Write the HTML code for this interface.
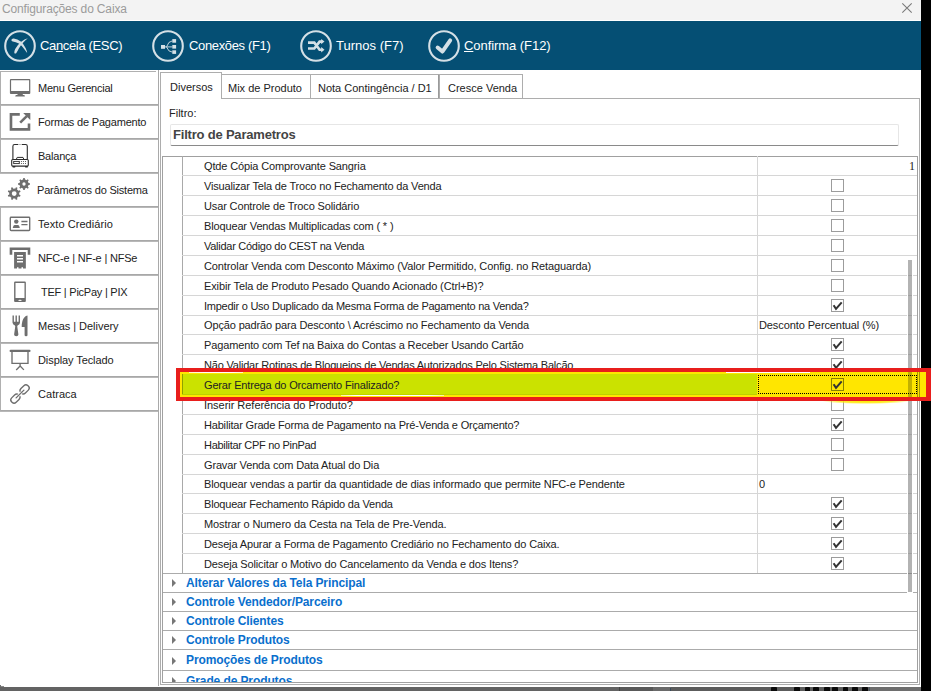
<!DOCTYPE html>
<html><head><meta charset="utf-8"><style>
*{margin:0;padding:0;box-sizing:border-box}
html,body{width:931px;height:691px;overflow:hidden;background:#fff;font-family:"Liberation Sans",sans-serif}
body{position:relative}
.a{position:absolute}
#title{left:0;top:0;width:921px;height:20px;background:#f3f3f3}
#title span{position:absolute;left:2px;top:2px;font-size:12px;color:#9b9b9b;letter-spacing:-0.15px;white-space:nowrap}
#black{left:921px;top:0;width:10px;height:691px;background:#000}
#tb{left:0;top:21px;width:921px;height:49px;background:#054f74}
.tbt{position:absolute;top:17px;font-size:13px;color:#fff;letter-spacing:-0.35px;white-space:nowrap}
.tbt u{text-decoration:underline;text-underline-offset:1px}
#bottom{left:0;top:687px;width:921px;height:4px;background:#636363}
.sb{position:absolute;left:0;width:158px;height:34px;border-left:1px solid #b0b0b0;border-bottom:1px solid #a8a8a8;box-shadow:0 1px 0 #b8b8b8}
.sb.sel{border-left:none}
.sbt{position:absolute;height:14px;line-height:14px;font-size:11px;color:#222;letter-spacing:-0.3px;white-space:nowrap}
.tab{position:absolute;border:1px solid #adadad;border-bottom:none;background:#fff}
.tabt{position:absolute;font-size:11px;line-height:14px;color:#222;letter-spacing:0px;white-space:nowrap}
.gl{position:absolute;left:182px;width:735px;height:1px;background:#d6d6d6}
.gl2{position:absolute;left:162px;width:755px;height:1px;background:#ababab}
.rt{position:absolute;left:204px;height:14px;font-size:11px;line-height:14px;color:#222;letter-spacing:-0.17px;white-space:nowrap}
.rv{position:absolute;height:14px;font-size:11px;line-height:14px;color:#222;white-space:nowrap}
.rv.num{left:906px;width:9px;text-align:right;font-family:"Liberation Serif",serif;font-size:12px}
.rv.txt{left:759px;letter-spacing:-0.1px}
.cb{position:absolute;left:831px;width:13px;height:13px;border:1px solid #9c9c9c;background:#fff}
.cb.hl{background:#ffe600;border-color:#8a8000}
.tri{position:absolute;left:172px;width:0;height:0;border-top:4px solid transparent;border-bottom:4px solid transparent;border-left:4px solid #777}
.gt{position:absolute;left:186px;height:15px;font-size:12px;line-height:15px;font-weight:bold;color:#0a6fcd;white-space:nowrap;letter-spacing:-0.1px}
#ov{position:absolute;left:0;top:0}
</style></head><body>
<div id="title" class="a"><span>Configurações do Caixa</span></div>
<div class="a" style="left:0;top:20px;width:921px;height:1px;background:#fff"></div>
<div id="black" class="a"></div>
<div id="tb" class="a">
  <div class="tbt" style="left:40px">Ca<u>n</u>cela (ESC)</div>
  <div class="tbt" style="left:189px">Conexões (F1)</div>
  <div class="tbt" style="left:336px;letter-spacing:0.02px">Turnos (F7)</div>
  <div class="tbt" style="left:464px;letter-spacing:-0.06px"><u>C</u>onfirma (F12)</div>
</div>
<div id="bottom" class="a"></div>
<div class="a" style="left:0;top:685px;width:1px;height:2px;background:#707070"></div>
<div class="a" style="left:1px;top:686px;width:3px;height:1px;background:#8a8a8a"></div>
<div class="a" style="left:619px;top:687px;width:1px;height:4px;background:#444"></div>
<div class="a" style="left:620px;top:687px;width:33px;height:4px;background:#595959"></div>
<div class="a" style="left:653px;top:687px;width:17px;height:4px;background:#6a6a6a"></div>
<div class="a" style="left:670px;top:688px;width:1px;height:3px;background:#3a4a5a"></div>
<div class="a" style="left:671px;top:687px;width:199px;height:4px;background:#5c5c5c"></div>
<div class="a" style="left:870px;top:687px;width:51px;height:4px;background:#6e6e6e"></div>
<div class="a" style="left:771px;top:687px;width:6px;height:4px;background:#0a0a0a;border-radius:1px 1px 0 0"></div>
<div class="a" style="left:794px;top:687px;width:6px;height:4px;background:#0a0a0a;border-radius:1px 1px 0 0"></div>
<div class="a" style="left:805px;top:687px;width:5px;height:4px;background:#0a0a0a;border-radius:1px 1px 0 0"></div>
<div class="a" style="left:813px;top:687px;width:6px;height:4px;background:#0a0a0a;border-radius:1px 1px 0 0"></div>
<div class="a" style="left:824px;top:687px;width:6px;height:4px;background:#0a0a0a;border-radius:1px 1px 0 0"></div>
<div class="a" style="left:832px;top:687px;width:6px;height:4px;background:#0a0a0a;border-radius:1px 1px 0 0"></div>
<div class="a" style="left:843px;top:687px;width:5px;height:4px;background:#0a0a0a;border-radius:1px 1px 0 0"></div>
<div class="a" style="left:852px;top:687px;width:6px;height:4px;background:#0a0a0a;border-radius:1px 1px 0 0"></div>
<div class="a" style="left:862px;top:687px;width:6px;height:4px;background:#0a0a0a;border-radius:1px 1px 0 0"></div>
<div class="a" style="left:869px;top:687px;width:1px;height:4px;background:#4a5560"></div>


<div class="sb" style="top:71px"></div>
<div class="sbt" style="left:38px;top:81px;letter-spacing:-0.223px">Menu Gerencial</div>
<div class="sb" style="top:105px"></div>
<div class="sbt" style="left:38px;top:115px;letter-spacing:-0.189px">Formas de Pagamento</div>
<div class="sb" style="top:139px"></div>
<div class="sbt" style="left:38px;top:149px;letter-spacing:-0.217px">Balança</div>
<div class="sb sel" style="top:173px"></div>
<div class="sbt" style="left:37px;top:183px;letter-spacing:-0.2px">Parâmetros do Sistema</div>
<div class="sb" style="top:207px"></div>
<div class="sbt" style="left:38px;top:217px;letter-spacing:0.057px">Texto Crediário</div>
<div class="sb" style="top:241px"></div>
<div class="sbt" style="left:38px;top:251px;letter-spacing:-0.189px">NFC-e | NF-e | NFSe</div>
<div class="sb" style="top:275px"></div>
<div class="sbt" style="left:41px;top:285px;letter-spacing:-0.241px">TEF | PicPay | PIX</div>
<div class="sb" style="top:309px"></div>
<div class="sbt" style="left:38px;top:319px;letter-spacing:-0.033px">Mesas | Delivery</div>
<div class="sb" style="top:343px"></div>
<div class="sbt" style="left:38px;top:353px;letter-spacing:-0.086px">Display Teclado</div>
<div class="sb" style="top:377px"></div>
<div class="sbt" style="left:38px;top:387px;letter-spacing:0.033px">Catraca</div>
<div class="a" style="left:0;top:71px;width:156px;height:1px;background:#b0b0b0"></div>
<div class="a" style="left:158px;top:70px;width:1px;height:616px;background:#a9a9a9"></div>

<!-- tabs -->
<div class="a" style="left:160px;top:98px;width:760px;height:587px;border:1px solid #adadad"></div>
<div class="tab" style="left:221px;top:74px;width:90px;height:24px"><div class="tabt" style="left:6px;top:6px">Mix de Produto</div></div>
<div class="tab" style="left:310px;top:74px;width:130px;height:24px;border-right:2px solid #9a9a9a"><div class="tabt" style="left:7px;top:6px">Nota Contingência / D1</div></div>
<div class="tab" style="left:439px;top:74px;width:84px;height:24px"><div class="tabt" style="left:8px;top:6px">Cresce Venda</div></div>
<div class="tab" style="left:160px;top:72px;width:62px;height:27px"><div class="tabt" style="left:9px;top:7px">Diversos</div></div>

<div class="a" style="left:169px;top:106px;font-size:11px;line-height:14px;color:#222">Filtro:</div>
<div class="a" style="left:170px;top:124px;width:729px;height:22px;border:1px solid #e6e6e6;border-bottom:1px solid #8a8a8a;border-radius:2px"></div>
<div class="a" style="left:173px;top:127px;font-size:13px;line-height:16px;font-weight:bold;color:#444;letter-spacing:-0.2px;white-space:nowrap">Filtro de Parametros</div>

<!-- grid -->
<div class="a" style="left:162px;top:156px;width:756px;height:527px;border:1px solid #a0a0a0"></div>
<div class="a" style="left:182px;top:156px;width:1px;height:417px;background:#a9a9a9"></div>
<div class="a" style="left:757px;top:156px;width:1px;height:417px;background:#d6d6d6"></div>
<div class="a" style="left:163px;top:157px;width:754px;height:525px;overflow:hidden"><div class="a" style="left:-163px;top:-157px;width:931px;height:691px">
<div class="gl" style="top:175px"></div>
<div class="gl" style="top:195px"></div>
<div class="gl" style="top:215px"></div>
<div class="gl" style="top:235px"></div>
<div class="gl" style="top:255px"></div>
<div class="gl" style="top:275px"></div>
<div class="gl" style="top:295px"></div>
<div class="gl" style="top:315px"></div>
<div class="gl" style="top:334px"></div>
<div class="gl" style="top:354px"></div>
<div class="gl" style="top:374px"></div>
<div class="gl" style="top:394px"></div>
<div class="gl" style="top:414px"></div>
<div class="gl" style="top:434px"></div>
<div class="gl" style="top:454px"></div>
<div class="gl" style="top:474px"></div>
<div class="gl" style="top:493px"></div>
<div class="gl" style="top:513px"></div>
<div class="gl" style="top:533px"></div>
<div class="gl" style="top:553px"></div>
<div class="gl2" style="top:573px"></div>
<div class="rt" style="top:159px;letter-spacing:-0.136px">Qtde Cópia Comprovante Sangria</div>
<div class="rv num" style="top:159px">1</div>
<div class="rt" style="top:179px;letter-spacing:-0.17px">Visualizar Tela de Troco no Fechamento da Venda</div>
<div class="cb" style="top:179px"></div>
<div class="rt" style="top:199px;letter-spacing:-0.138px">Usar Controle de Troco Solidário</div>
<div class="cb" style="top:199px"></div>
<div class="rt" style="top:219px;letter-spacing:-0.144px">Bloquear Vendas Multiplicadas com ( * )</div>
<div class="cb" style="top:219px"></div>
<div class="rt" style="top:239px;letter-spacing:-0.27px">Validar Código do CEST na Venda</div>
<div class="cb" style="top:239px"></div>
<div class="rt" style="top:259px;letter-spacing:-0.117px">Controlar Venda com Desconto Máximo (Valor Permitido, Config. no Retaguarda)</div>
<div class="cb" style="top:259px"></div>
<div class="rt" style="top:279px;letter-spacing:-0.114px">Exibir Tela de Produto Pesado Quando Acionado (Ctrl+B)?</div>
<div class="cb" style="top:279px"></div>
<div class="rt" style="top:299px;letter-spacing:-0.253px">Impedir o Uso Duplicado da Mesma Forma de Pagamento na Venda?</div>
<div class="cb" style="top:299px"><svg width="13" height="13" viewBox="831 299 13 13" style="position:absolute;left:-1px;top:-1px"><path d="M833.6 305.2 L836.0 308.9 L841.7 302.3" fill="none" stroke="#333" stroke-width="2"/></svg></div>
<div class="rt" style="top:318px;letter-spacing:-0.137px">Opção padrão para Desconto \ Acréscimo no Fechamento da Venda</div>
<div class="rv txt" style="top:318px">Desconto Percentual (%)</div>
<div class="rt" style="top:338px;letter-spacing:-0.136px">Pagamento com Tef na Baixa do Contas a Receber Usando Cartão</div>
<div class="cb" style="top:338px"><svg width="13" height="13" viewBox="831 299 13 13" style="position:absolute;left:-1px;top:-1px"><path d="M833.6 305.2 L836.0 308.9 L841.7 302.3" fill="none" stroke="#333" stroke-width="2"/></svg></div>
<div class="rt" style="top:358px;letter-spacing:-0.197px">Não Validar Rotinas de Bloqueios de Vendas Autorizados Pelo Sistema Balcão</div>
<div class="cb" style="top:358px"><svg width="13" height="13" viewBox="831 299 13 13" style="position:absolute;left:-1px;top:-1px"><path d="M833.6 305.2 L836.0 308.9 L841.7 302.3" fill="none" stroke="#333" stroke-width="2"/></svg></div>
<div class="rt" style="top:398px;letter-spacing:-0.032px">Inserir Referência do Produto?</div>
<div class="cb" style="top:398px"></div>
<div class="rt" style="top:418px;letter-spacing:-0.187px">Habilitar Grade Forma de Pagamento na Pré-Venda e Orçamento?</div>
<div class="cb" style="top:418px"><svg width="13" height="13" viewBox="831 299 13 13" style="position:absolute;left:-1px;top:-1px"><path d="M833.6 305.2 L836.0 308.9 L841.7 302.3" fill="none" stroke="#333" stroke-width="2"/></svg></div>
<div class="rt" style="top:438px;letter-spacing:-0.306px">Habilitar CPF no PinPad</div>
<div class="cb" style="top:438px"></div>
<div class="rt" style="top:458px;letter-spacing:-0.155px">Gravar Venda com Data Atual do Dia</div>
<div class="cb" style="top:458px"></div>
<div class="rt" style="top:477px;letter-spacing:-0.109px">Bloquear vendas a partir da quantidade de dias informado que permite NFC-e Pendente</div>
<div class="rv txt" style="top:477px">0</div>
<div class="rt" style="top:497px;letter-spacing:-0.199px">Bloquear Fechamento Rápido da Venda</div>
<div class="cb" style="top:497px"><svg width="13" height="13" viewBox="831 299 13 13" style="position:absolute;left:-1px;top:-1px"><path d="M833.6 305.2 L836.0 308.9 L841.7 302.3" fill="none" stroke="#333" stroke-width="2"/></svg></div>
<div class="rt" style="top:517px;letter-spacing:-0.105px">Mostrar o Numero da Cesta na Tela de Pre-Venda.</div>
<div class="cb" style="top:517px"><svg width="13" height="13" viewBox="831 299 13 13" style="position:absolute;left:-1px;top:-1px"><path d="M833.6 305.2 L836.0 308.9 L841.7 302.3" fill="none" stroke="#333" stroke-width="2"/></svg></div>
<div class="rt" style="top:537px;letter-spacing:-0.14px">Deseja Apurar a Forma de Pagamento Crediário no Fechamento do Caixa.</div>
<div class="cb" style="top:537px"><svg width="13" height="13" viewBox="831 299 13 13" style="position:absolute;left:-1px;top:-1px"><path d="M833.6 305.2 L836.0 308.9 L841.7 302.3" fill="none" stroke="#333" stroke-width="2"/></svg></div>
<div class="rt" style="top:557px;letter-spacing:-0.138px">Deseja Solicitar o Motivo do Cancelamento da Venda e dos Itens?</div>
<div class="cb" style="top:557px"><svg width="13" height="13" viewBox="831 299 13 13" style="position:absolute;left:-1px;top:-1px"><path d="M833.6 305.2 L836.0 308.9 L841.7 302.3" fill="none" stroke="#333" stroke-width="2"/></svg></div>
<div class="gl2" style="top:592px"></div>
<div class="tri" style="top:579px"></div>
<div class="gt" style="top:576px">Alterar Valores da Tela Principal</div>
<div class="gl2" style="top:611px"></div>
<div class="tri" style="top:598px"></div>
<div class="gt" style="top:595px">Controle Vendedor/Parceiro</div>
<div class="gl2" style="top:630px"></div>
<div class="tri" style="top:617px"></div>
<div class="gt" style="top:614px">Controle Clientes</div>
<div class="gl2" style="top:649px"></div>
<div class="tri" style="top:636px"></div>
<div class="gt" style="top:633px">Controle Produtos</div>
<div class="gl2" style="top:670px"></div>
<div class="tri" style="top:657px"></div>
<div class="gt" style="top:653px">Promoções de Produtos</div>
<div class="gl2" style="top:690px"></div>
<div class="tri" style="top:677px"></div>
<div class="gt" style="top:674px">Grade de Produtos</div>
<div class="a" style="left:907px;top:259px;width:6px;height:334px;background:#fff"></div>
<div class="a" style="left:908px;top:260px;width:4px;height:332px;background:#b3b3b3"></div>
<div class="a" style="left:908px;top:275px;width:4px;height:1px;background:#a0a0a0"></div>
<div class="a" style="left:908px;top:295px;width:4px;height:1px;background:#a0a0a0"></div>
<div class="a" style="left:908px;top:315px;width:4px;height:1px;background:#a0a0a0"></div>
<div class="a" style="left:908px;top:334px;width:4px;height:1px;background:#a0a0a0"></div>
<div class="a" style="left:908px;top:354px;width:4px;height:1px;background:#a0a0a0"></div>
<div class="a" style="left:908px;top:374px;width:4px;height:1px;background:#a0a0a0"></div>
<div class="a" style="left:908px;top:394px;width:4px;height:1px;background:#a0a0a0"></div>
<div class="a" style="left:908px;top:414px;width:4px;height:1px;background:#a0a0a0"></div>
<div class="a" style="left:908px;top:434px;width:4px;height:1px;background:#a0a0a0"></div>
<div class="a" style="left:908px;top:454px;width:4px;height:1px;background:#a0a0a0"></div>
<div class="a" style="left:908px;top:474px;width:4px;height:1px;background:#a0a0a0"></div>
<div class="a" style="left:908px;top:493px;width:4px;height:1px;background:#a0a0a0"></div>
<div class="a" style="left:908px;top:513px;width:4px;height:1px;background:#a0a0a0"></div>
<div class="a" style="left:908px;top:533px;width:4px;height:1px;background:#a0a0a0"></div>
<div class="a" style="left:908px;top:553px;width:4px;height:1px;background:#a0a0a0"></div>
<div class="a" style="left:908px;top:573px;width:4px;height:1px;background:#8a8a8a"></div>
</div></div>
<div class="a" style="left:176px;top:368px;width:755px;height:33px;background:#e81e1c"></div>
<div class="a" style="left:180px;top:372px;width:746px;height:25px;background:#ffe600"></div>
<div class="a" style="left:182px;top:374px;width:575px;height:21px;background:#cbe200"></div>
<div class="a" style="left:182px;top:374px;width:1px;height:21px;background:#8fa000"></div>
<div class="a" style="left:189px;top:372px;width:54px;height:1px;background:linear-gradient(90deg,#fff8c0,#fff 30%,#fff 80%,#fff8c0)"></div>
<div class="a" style="left:908px;top:372px;width:4px;height:25px;background:#c2b000"></div>
<div class="a" style="left:726px;top:372px;width:84px;height:1px;background:#fff"></div>
<div class="a" style="left:182px;top:394px;width:575px;height:1px;background:#bfd000"></div>
<div class="a" style="left:341px;top:395px;width:103px;height:1px;background:linear-gradient(90deg,#fff3a0,#fff 15%,#fff 85%,#fff3a0)"></div>
<div class="a" style="left:917px;top:372px;width:1px;height:25px;background:#a89800"></div>
<div class="a" style="left:919px;top:372px;width:1px;height:25px;background:#a89800"></div>
<div class="a" style="left:822px;top:401px;width:88px;height:3px;background:radial-gradient(ellipse 50% 100% at 50% 0%,rgba(255,232,0,1),rgba(255,232,0,.8) 60%,rgba(255,232,0,0) 100%)"></div>
<div class="rt" style="top:378px;letter-spacing:-0.17px">Gerar Entrega do Orcamento Finalizado?</div>
<div class="cb hl" style="top:378px"><svg width="13" height="13" viewBox="831 299 13 13" style="position:absolute;left:-1px;top:-1px"><path d="M833.6 305.2 L836.0 308.9 L841.7 302.3" fill="none" stroke="#333" stroke-width="2"/></svg></div>
<div class="a" style="left:758px;top:375px;width:159px;height:19px;border:1px dotted #000"></div>

<svg id="ov" width="931" height="691" viewBox="0 0 931 691">
<path d="M902.3 3.3 L911.7 12.7 M911.7 3.3 L902.3 12.7" stroke="#7a7a7a" stroke-width="1.1"/>
<circle cx="20" cy="46" r="14.8" fill="none" stroke="#d5e0e6" stroke-width="2.1"/>
<circle cx="168" cy="46" r="14.8" fill="none" stroke="#d5e0e6" stroke-width="2.1"/>
<circle cx="316" cy="46" r="14.8" fill="none" stroke="#d5e0e6" stroke-width="2.1"/>
<circle cx="444" cy="46" r="14.8" fill="none" stroke="#d5e0e6" stroke-width="2.1"/>
<path fill="#d5e0e6" d="M11.4 40.0 Q11.6 38.3 13.8 38.5 Q17.5 39 20.8 41.5 Q23.8 44 25.6 48 Q26.8 50.5 27.2 53 Q25.5 50.8 23.8 48.5 Q21.5 45.5 18.8 43.6 Q15.8 41.8 12.8 41.4 Q11.4 41.2 11.4 40.0 Z"/>
<path fill="#d5e0e6" d="M27.9 38.3 Q24.5 39.2 21.5 41.6 Q17.5 45 15.2 49 Q14 51.5 14.3 53 Q15 54 16.2 53.2 Q17.5 51.2 19 48.3 Q21 44.6 23.5 42.2 Q25.8 40 27.9 38.3 Z"/>
<rect x="161" y="45" width="4" height="3.8" fill="#d5e0e6"/>
<rect x="172.3" y="39.1" width="3.8" height="3.6" fill="#d5e0e6"/>
<rect x="172.3" y="45" width="3.8" height="3.6" fill="#d5e0e6"/>
<rect x="172.3" y="50.3" width="3.8" height="3.6" fill="#d5e0e6"/>
<path fill="none" stroke="#d5e0e6" stroke-width="0.9" d="M165 46.9 H172.3 M166.5 46.9 Q168.5 41 172.3 40.9 M166.5 46.9 Q168.5 52.2 172.3 52.1"/>
<path fill="none" stroke="#d5e0e6" stroke-width="2.6" d="M308 42.6 H314.3 L319.6 49.7 H322 M308 48.5 H314.3 L319.6 41.6 H322"/>
<path fill="#d5e0e6" d="M321.2 38.9 L324.5 41.6 L321.2 44.3 Z M321.2 47 L324.5 49.7 L321.2 52.4 Z"/>
<path fill="none" stroke="#d5e0e6" stroke-width="3.9" stroke-linecap="round" stroke-linejoin="round" d="M437.6 47.6 L442.4 51.6 L450.2 40.3"/>
<path fill="#6e6e6e" fill-rule="evenodd" d="M10.9 79.1 H29.3 Q30.3 79.1 30.3 80.1 V92.9 Q30.3 93.9 29.3 93.9 H10.9 Q9.9 93.9 9.9 92.9 V80.1 Q9.9 79.1 10.9 79.1 Z M11.1 80.2 V91.0 H29.1 V80.2 Z"/>
<path fill="#6e6e6e" d="M17.5 93.8 H22.8 V95.1 H24.4 L24.9 96.6 H15.2 L15.8 95.1 H17.5 Z"/>
<path fill="#6e6e6e" d="M9.65 113.1 H19.8 V115.7 H12.3 V128.1 H27.7 V123.6 H30.3 V130.7 H9.65 Z"/>
<path fill="#6e6e6e" d="M23.2 113.1 H30.3 V119.9 Z"/>
<path stroke="#6e6e6e" stroke-width="2.6" d="M20.2 122.7 L26.8 116.1"/>
<path fill="none" stroke="#2b2b2b" stroke-width="1.1" d="M12.9 159.2 V146.2 Q12.9 144.5 14.6 144.5 H18.2 M21.8 144.5 H25.6 Q27.3 144.5 27.3 146.2 V159.2"/>
<path fill="none" stroke="#bbb" stroke-width="1" d="M18.2 144.5 H21.8"/>
<rect x="11.7" y="159.5" width="16.6" height="6.6" rx="1" fill="none" stroke="#2b2b2b" stroke-width="1.1"/>
<path fill="none" stroke="#2b2b2b" stroke-width="1" d="M16.4 159.2 L17.2 157.4 H23 L23.8 159.2"/>
<rect x="13.7" y="161.4" width="5.6" height="2.2" fill="none" stroke="#2b2b2b" stroke-width="0.9"/>
<circle cx="21.4" cy="161.6" r="0.5" fill="#2b2b2b"/>
<circle cx="21.4" cy="163.5" r="0.5" fill="#2b2b2b"/>
<circle cx="23.4" cy="161.6" r="0.5" fill="#2b2b2b"/>
<circle cx="23.4" cy="163.5" r="0.5" fill="#2b2b2b"/>
<circle cx="25.5" cy="161.6" r="0.5" fill="#2b2b2b"/>
<circle cx="25.5" cy="163.5" r="0.5" fill="#2b2b2b"/>
<path fill="#2b2b2b" d="M12.6 166 H15.3 V166.9 Q15.3 167.6 14.6 167.6 H13.3 Q12.6 167.6 12.6 166.9 Z M25.1 166 H27.8 V166.9 Q27.8 167.6 27.1 167.6 H25.8 Q25.1 167.6 25.1 166.9 Z"/>
<path fill="#6e6e6e" fill-rule="evenodd" d="M28.25 182.24 L28.50 183.07 L29.95 183.25 L29.95 184.75 L28.50 184.93 L28.25 185.76 L27.84 186.53 L28.74 187.68 L27.68 188.74 L26.53 187.84 L25.76 188.25 L24.93 188.50 L24.75 189.95 L23.25 189.95 L23.07 188.50 L22.24 188.25 L21.47 187.84 L20.32 188.74 L19.26 187.68 L20.16 186.53 L19.75 185.76 L19.50 184.93 L18.05 184.75 L18.05 183.25 L19.50 183.07 L19.75 182.24 L20.16 181.47 L19.26 180.32 L20.32 179.26 L21.47 180.16 L22.24 179.75 L23.07 179.50 L23.25 178.05 L24.75 178.05 L24.93 179.50 L25.76 179.75 L26.53 180.16 L27.68 179.26 L28.74 180.32 L27.84 181.47 Z M25.65 184.00 A1.65 1.65 0 1 0 22.35 184.00 A1.65 1.65 0 1 0 25.65 184.00 Z"/>
<path fill="#6e6e6e" fill-rule="evenodd" d="M19.20 193.60 L19.11 194.56 L20.56 195.37 L19.95 196.84 L18.35 196.39 L17.74 197.14 L16.99 197.75 L17.44 199.35 L15.97 199.96 L15.16 198.51 L14.20 198.60 L13.24 198.51 L12.43 199.96 L10.96 199.35 L11.41 197.75 L10.66 197.14 L10.05 196.39 L8.45 196.84 L7.84 195.37 L9.29 194.56 L9.20 193.60 L9.29 192.64 L7.84 191.83 L8.45 190.36 L10.05 190.81 L10.66 190.06 L11.41 189.45 L10.96 187.85 L12.43 187.24 L13.24 188.69 L14.20 188.60 L15.16 188.69 L15.97 187.24 L17.44 187.85 L16.99 189.45 L17.74 190.06 L18.35 190.81 L19.95 190.36 L20.56 191.83 L19.11 192.64 Z M16.60 193.60 A2.4 2.4 0 1 0 11.80 193.60 A2.4 2.4 0 1 0 16.60 193.60 Z"/>
<rect x="10.3" y="217.2" width="19.4" height="13.3" rx="0.8" fill="none" stroke="#6e6e6e" stroke-width="1.35"/>
<circle cx="16.3" cy="221.6" r="2.2" fill="#6e6e6e"/>
<path fill="#6e6e6e" d="M12.7 228.1 L13.4 225.9 Q13.8 225.1 14.8 225.0 H17.8 Q18.8 225.1 19.2 225.9 L19.8 228.1 Z"/>
<path stroke="#6e6e6e" stroke-width="1.3" d="M21.4 221.5 H27.5 M21.4 224.6 H27.5"/>
<path fill="#6e6e6e" d="M9.65 247.6 H30.3 V254.7 H27.7 V250.1 H12.3 V254.7 H9.65 Z"/>
<path fill="#6e6e6e" fill-rule="evenodd" d="M14.1 252.1 H25.85 V268.5 H23.0 V267.2 H21.5 V268.5 H18.5 V267.2 H17.0 V268.5 H14.1 Z M17 254.9 V256.4 H23 V254.9 Z M17 258.0 V259.6 H23 V258.0 Z M17 261.0 V262.6 H23 V261.0 Z"/>
<path fill="#6e6e6e" fill-rule="evenodd" d="M15.1 281.4 H24.85 Q25.85 281.4 25.85 282.4 V301.1 Q25.85 302.1 24.85 302.1 H15.1 Q14.1 302.1 14.1 301.1 V282.4 Q14.1 281.4 15.1 281.4 Z M15.5 282.9 V298.0 H24.5 V282.9 Z M18.2 300.3 A1.8 0.65 0 1 0 21.8 300.3 A1.8 0.65 0 1 0 18.2 300.3 Z"/>
<path fill="#6e6e6e" d="M12.5 315.4 H13.9 V321.7 H15.5 V315.4 H16.9 V321.7 H18.6 V315.4 H20.0 V322.5 Q20.0 324.6 17.6 325.4 Q17.0 326 17.4 327.5 L18.4 334.6 Q18.4 336.2 16.25 336.2 Q14.1 336.2 14.1 334.6 L15.1 327.5 Q15.5 326 14.9 325.4 Q12.5 324.6 12.5 322.5 Z"/>
<path fill="#6e6e6e" d="M27.5 315.6 V335.2 Q27.5 336.3 26.05 336.3 Q24.6 336.3 24.6 335.2 V327.0 H21.7 Q21.5 320.5 24.5 317.2 Q25.8 315.6 27.5 315.6 Z"/>
<path stroke="#6e6e6e" stroke-width="2.1" stroke-linecap="round" d="M10.6 350.9 H29.5"/>
<path fill="none" stroke="#6e6e6e" stroke-width="1.35" d="M12.0 351.5 V363.3 H28.0 V351.5"/>
<path fill="none" stroke="#6e6e6e" stroke-width="1.35" d="M20.1 363.5 V366 M16.2 369.9 L20.1 366 L23.9 369.9"/>
<g transform="rotate(-45 20 394)" fill="none" stroke="#6e6e6e" stroke-width="1.35"><rect x="21.6" y="390.85" width="9.9" height="6.3" rx="2.9"/><rect x="8.5" y="390.85" width="9.9" height="6.3" rx="2.9"/><path d="M17.6 394 H22.4" stroke="#fff" stroke-width="2.8"/><path d="M14.5 394 H25.5" stroke-linecap="round"/></g>
</svg>
</body></html>
